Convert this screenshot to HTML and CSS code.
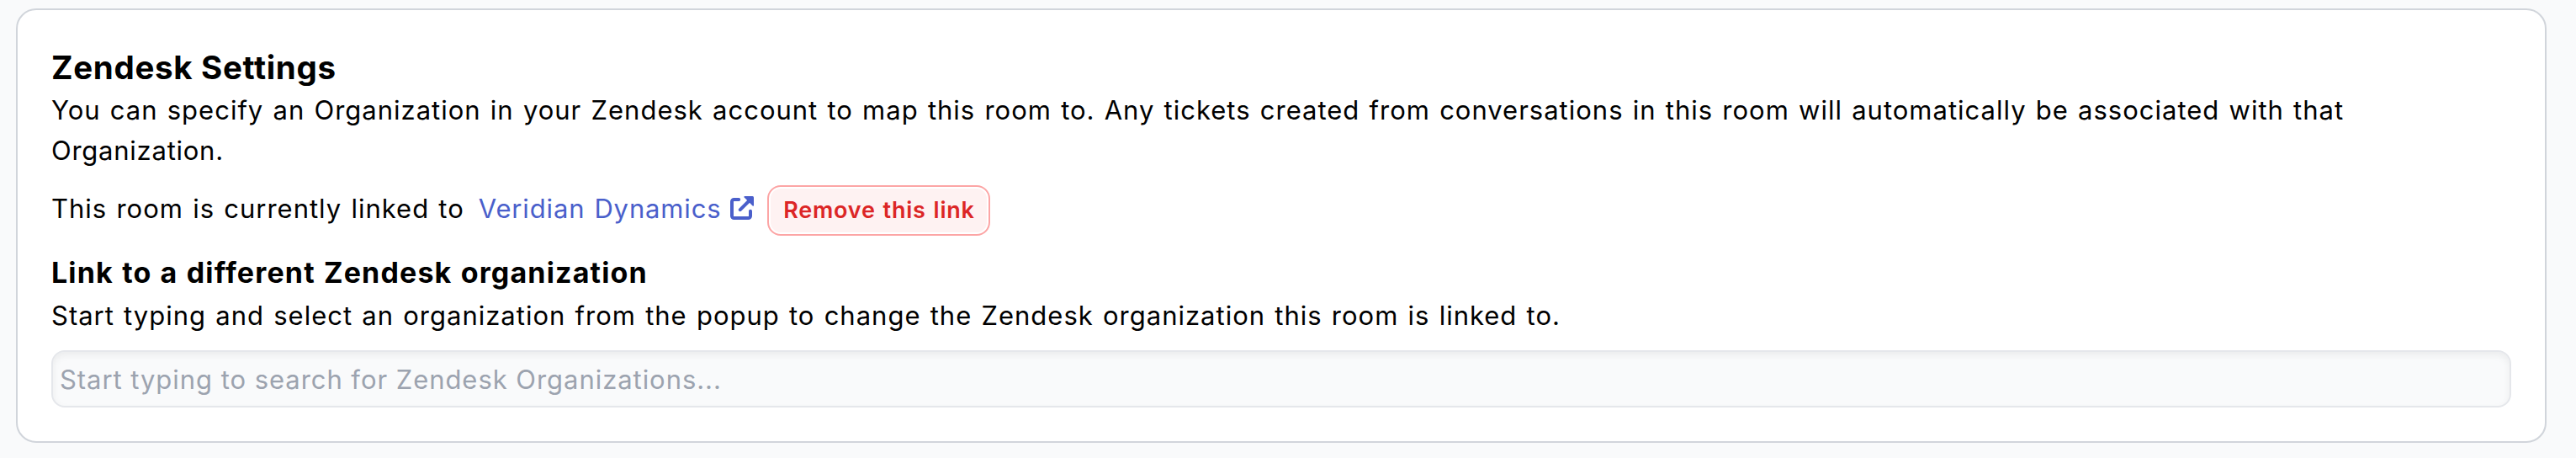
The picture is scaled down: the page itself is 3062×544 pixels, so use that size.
FILE: index.html
```
<!DOCTYPE html>
<html lang="en">
<head>
<meta charset="utf-8">
<title>Zendesk Settings</title>
<link rel="stylesheet" href="styles.css">
</head>
<body>
<main class="page">
  <section class="card">
    <h1 class="title">Zendesk Settings</h1>
    <p class="text intro">You can specify an Organization in your Zendesk account to map this room to. Any tickets created from conversations in this room will automatically be associated with that <span class="tail">Organization.</span></p>
    <div class="linked">
      <span class="text">This room is currently linked to</span>
      <a class="text org-link" href="#"><span>Veridian Dynamics</span><svg class="icon" viewBox="0 0 28 28" aria-hidden="true"><path d="M10.2 4H4.5A2.5 2.5 0 0 0 2 6.5V23.5A2.5 2.5 0 0 0 4.5 26H21.5A2.5 2.5 0 0 0 24 23.5V17.7M11.8 16.2L22 6" fill="none" stroke="currentColor" stroke-width="4" stroke-linecap="round"/><path d="M17.3 0H26.5Q28 0 28 1.5V10.7Q28 12.6 26.4 11.3L16.7 1.6Q15.6 0 17.3 0Z" fill="currentColor"/></svg></a>
      <button class="remove" type="button">Remove this link</button>
    </div>
    <h2 class="subtitle">Link to a different Zendesk organization</h2>
    <p class="text hint">Start typing and select an organization from the popup to change the Zendesk organization this room is linked to.</p>
    <input class="search" type="text" placeholder="Start typing to search for Zendesk Organizations...">
  </section>
</main>
</body>
</html>
```
FILE: styles.css
```
* { box-sizing: border-box; }
body {
  margin: 0;
  background: #f9fafb;
  color: #000;
  font-family: Inter, "Liberation Sans", sans-serif;
}
.page { height: 544px; padding: 10px 35px 18px 19px; }
.card {
  height: 516px;
  padding: 41px 40px 40px;
  background: #fff;
  border: 2px solid #d1d5db;
  border-radius: 24px;
}
.title, .subtitle, .text { margin: 0; }
.title { font-size: 38.5px; line-height: 54px; font-weight: 700; letter-spacing: 0.67px; }
.text { font-size: 31px; line-height: 48px; letter-spacing: 1px; word-spacing: 1.5px; }
.intro { max-width: 2800px; }
.tail { letter-spacing: .75px; }
.linked { display: flex; align-items: baseline; height: 60px; margin-top: 17px; }
.org-link {
  display: flex;
  align-items: baseline;
  margin-left: 17px;
  color: #4a5fcb;
  text-decoration: none;
  letter-spacing: .85px;
}
.icon { width: 28px; height: 28px; margin-left: 11px; transform: translateY(2px); }
.remove {
  width: 265px;
  height: 60px;
  margin-left: 16px;
  padding: 0;
  border: 2px solid #fca5a5;
  border-radius: 16px;
  background: #fef2f2;
  box-shadow: inset 0 0 0 2px #fff;
  color: #dc2626;
  font: 600 27px/56px Inter, "Liberation Sans", sans-serif;
  letter-spacing: .8px;
  word-spacing: 1.2px;
}
.subtitle { margin-top: 18px; font-size: 34px; line-height: 52px; font-weight: 700; letter-spacing: 1.15px; word-spacing: 1px; }
.hint { margin-top: 1px; }
.search {
  display: block;
  width: 100%;
  height: 68px;
  margin-top: 17px;
  padding: 0 8px;
  border: 2px solid #e5e7eb;
  border-radius: 16px;
  background: #f9fafb;
  box-shadow: inset 0 4px 8px rgba(0, 0, 0, .06);
  font: 31px/48px Inter, "Liberation Sans", sans-serif;
  letter-spacing: .95px;
}
.search::placeholder { color: #9ca3af; opacity: 1; }
```
